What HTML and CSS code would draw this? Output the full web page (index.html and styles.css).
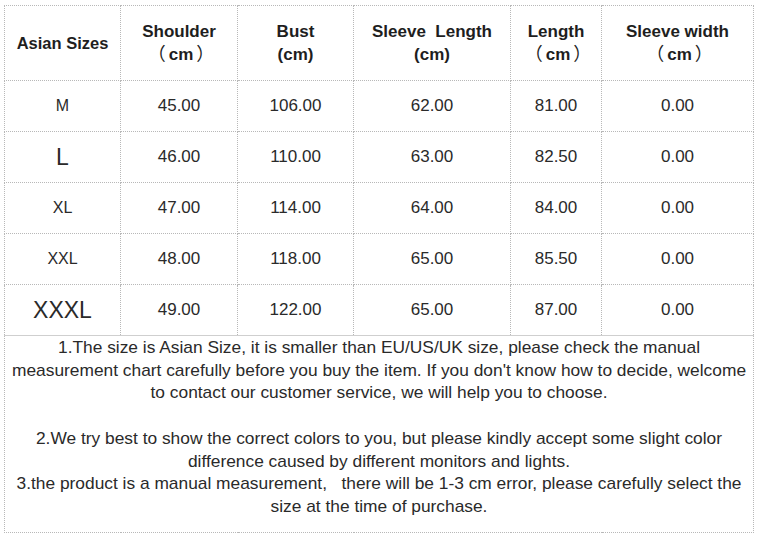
FILE: index.html
```html
<!DOCTYPE html>
<html>
<head>
<meta charset="utf-8">
<link rel="stylesheet" href="styles.css">
</head>
<body>
<table class="chart">
  <colgroup>
    <col class="c1"><col class="c2"><col class="c3"><col class="c4"><col class="c5"><col class="c6">
  </colgroup>
  <tr class="head">
    <th class="first">Asian Sizes</th>
    <th>Shoulder<br><span class="pl">（</span>cm<span class="pr">）</span></th>
    <th>Bust<br>(cm)</th>
    <th>Sleeve&nbsp; Length<br>(cm)</th>
    <th>Length<br><span class="pl">（</span>cm<span class="pr">）</span></th>
    <th>Sleeve width<br><span class="pl">（</span>cm<span class="pr">）</span></th>
  </tr>
  <tr><td class="size">M</td><td>45.00</td><td>106.00</td><td>62.00</td><td>81.00</td><td>0.00</td></tr>
  <tr><td class="size big">L</td><td>46.00</td><td>110.00</td><td>63.00</td><td>82.50</td><td>0.00</td></tr>
  <tr><td class="size">XL</td><td>47.00</td><td>114.00</td><td>64.00</td><td>84.00</td><td>0.00</td></tr>
  <tr><td class="size">XXL</td><td>48.00</td><td>118.00</td><td>65.00</td><td>85.50</td><td>0.00</td></tr>
  <tr><td class="size big">XXXL</td><td>49.00</td><td>122.00</td><td>65.00</td><td>87.00</td><td>0.00</td></tr>
  <tr class="notes-row">
    <td colspan="6" class="notes">
      <p>1.The size is Asian Size, it is smaller than EU/US/UK size, please check the manual<br>measurement chart carefully before you buy the item. If you don't know how to decide, welcome<br>to contact our customer service, we will help you to choose.</p>
      <p class="gap">2.We try best to show the correct colors to you, but please kindly accept some slight color<br>difference caused by different monitors and lights.<br>3.the product is a manual measurement, &nbsp; there will be 1-3 cm error, please carefully select the<br>size at the time of purchase.</p>
    </td>
  </tr>
</table>
</body>
</html>
```
FILE: styles.css
```css
html, body {
  margin: 0;
  padding: 0;
  background: #ffffff;
}
body {
  padding: 5px 0 0 4px;
  font-family: "Liberation Sans", Arial, sans-serif;
  color: #222222;
}
.chart {
  border-collapse: collapse;
  table-layout: fixed;
  width: 749px;
}
.c1 { width: 116px; }
.c2 { width: 117px; }
.c3 { width: 116px; }
.c4 { width: 157px; }
.c5 { width: 91px; }
.c6 { width: 152px; }
.chart th, .chart td {
  border: 1px dotted #b8b8b8;
  text-align: center;
  vertical-align: middle;
  padding: 0;
}
.head th {
  height: 74px;
  font-size: 17px;
  font-weight: bold;
  line-height: 23px;
  color: #1e1e1e;
}
.head th.first {
  font-size: 16.5px;
}
.pl, .pr {
  font-family: "Noto Sans CJK SC", sans-serif;
  font-weight: normal;
  font-size: 18px;
  line-height: 0;
}
.pl {
  margin-left: -7px;
  margin-right: 3px;
}
.pr {
  margin-left: 3px;
  margin-right: -11px;
}
.chart td {
  height: 50px;
  font-size: 17px;
  color: #2a2a2a;
}
.chart td.size {
  font-size: 16px;
}
.chart td.big {
  font-size: 23px;
}
.notes-row td.notes {
  height: 196px;
  border-top: 1px solid #cfcfcf;
  vertical-align: top;
  font-size: 17.35px;
  line-height: 22.7px;
  color: #2a2a2a;
  padding-top: 0;
}
.notes p {
  margin: 0;
}
.notes p.gap {
  margin-top: 22.7px;
}
```
